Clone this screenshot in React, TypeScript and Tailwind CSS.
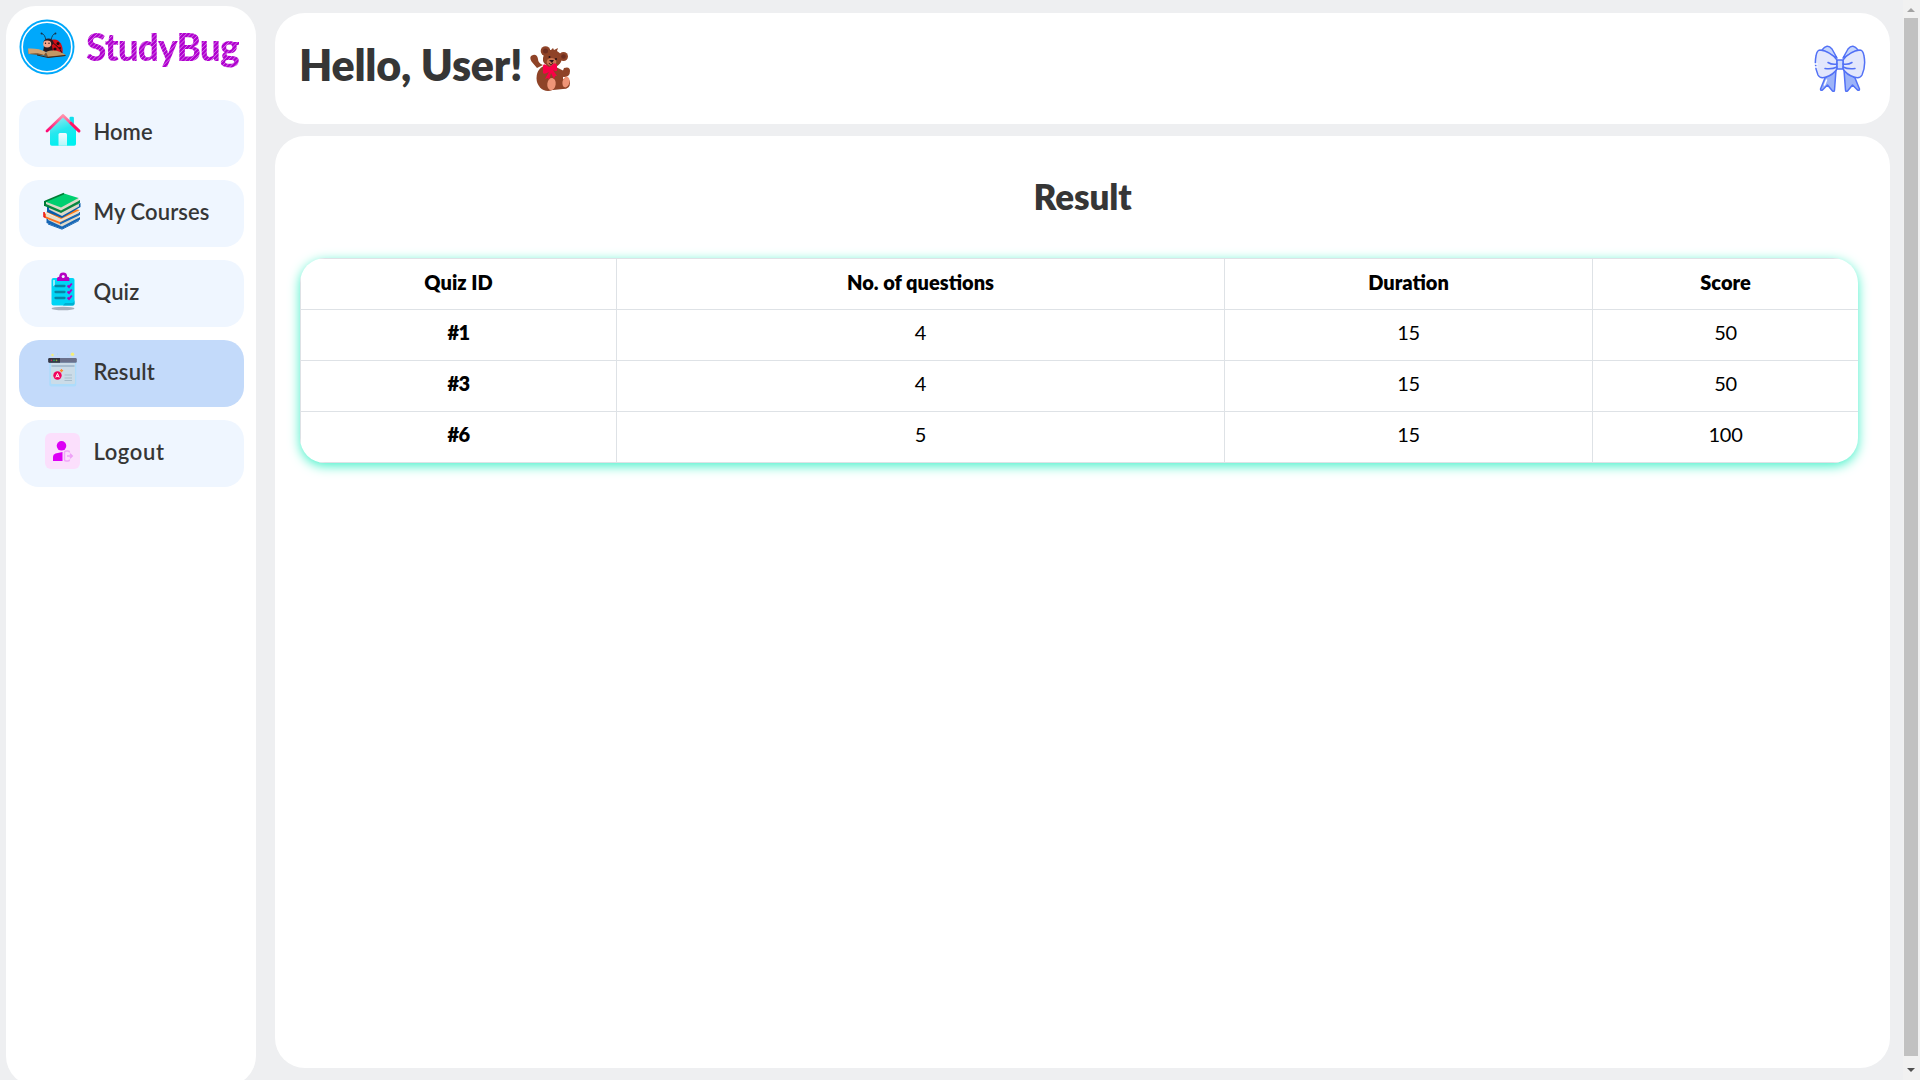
import React from "react";

function LogoBadge() {
  return (
    <svg viewBox="0 0 56 56" className="h-14 w-14 shrink-0">
      <circle cx="28" cy="28" r="27.5" fill="#00a8fb" />
      <circle cx="28" cy="28" r="24.8" fill="none" stroke="#fff" strokeWidth="1.6" />
      <path d="M27 21C26 17 25 15 22.500 14.500M32 21C33 17 34 15 36.500 14.500" fill="none" stroke="#183247" strokeWidth=".9" />
      <circle cx="22.500" cy="14.500" r=".9" fill="#183247" />
      <circle cx="36.500" cy="14.500" r=".9" fill="#183247" />
      <path d="M31 22C38 17 45 25 43.500 34L33 33Z" fill="#d40d16" />
      <path d="M31 22C36 25 41 29 43 34" stroke="#30090c" strokeWidth="1" fill="none" />
      <circle cx="39" cy="24.500" r="1.500" fill="#20090d" />
      <circle cx="36" cy="30" r="1.600" fill="#20090d" />
      <circle cx="41" cy="29" r="1" fill="#20090d" />
      <path d="M25 27h8l1 6H24Z" fill="#25181e" />
      <ellipse cx="29.500" cy="23.500" rx="5" ry="4" fill="#2b1b22" />
      <ellipse cx="28.200" cy="25" rx="4" ry="3.400" fill="#f3a58b" />
      <circle cx="26.500" cy="24.300" r=".7" fill="#1c1014" />
      <circle cx="30" cy="24.300" r=".7" fill="#1c1014" />
      <path d="M9 30L18 30.500 27 34 37 31.500 46.500 36 46 37 29 38.500 25 36.500 9.500 35Z" fill="#7b5634" />
      <path d="M9 29.500C15 29 22 30 27 33L25 36C20 33.500 14 34 9.500 35Z" fill="#d1a574" />
      <path d="M27 33C34 30 41 32 46.500 36L29 37.500Z" fill="#c39765" />
      <path d="M18 36L29 38.500 46.500 36.500" fill="none" stroke="#3b281c" strokeWidth="1" />
    </svg>
  );
}

function HomeIcon() {
  return (
    <svg viewBox="0 0 36 36" className="h-9 w-9">
      <defs>
        <linearGradient id="wall" x1="0" y1="0" x2=".35" y2="1">
          <stop stopColor="#a5e8ee" /><stop offset=".55" stopColor="#27e7ee" /><stop offset="1" stopColor="#00f0f0" />
        </linearGradient>
        <linearGradient id="roof" x1="0" y1="0" x2="0" y2="1">
          <stop stopColor="#ff91aa" /><stop offset="1" stopColor="#ff0874" />
        </linearGradient>
        <linearGradient id="door" x1="0" y1="0" x2="0" y2="1">
          <stop stopColor="#f5fbff" /><stop offset="1" stopColor="#b3f7fa" />
        </linearGradient>
      </defs>
      <path d="M24.500 5q0-1.200 1.200-1.200h2q1.200 0 1.200 1.200v9h-4.400Z" fill="#12dfec" />
      <path d="M5 16L18 4 31 16v15q0 1.800-1.800 1.800H6.800Q5 32.800 5 31Z" fill="url(#wall)" />
      <path d="M13.500 32.800V21.500q0-1.500 1.500-1.500h5.500q1.500 0 1.500 1.500v11.300Z" fill="url(#door)" />
      <path d="M2 18L18 2.500 34 18" fill="none" stroke="url(#roof)" strokeWidth="2.700" strokeLinecap="round" strokeLinejoin="round" />
      <path d="M26 10.200L34 18" stroke="#ff1464" strokeWidth="2.700" strokeLinecap="round" />
    </svg>
  );
}

function BooksIcon() {
  return (
    <svg viewBox="0 0 38 38" className="-mt-px -ml-0.5 h-[38px] w-[38px] shrink-0">
      <path d="M3.500 26V31L19 37 37 27.500V25L19 33Z" fill="#1565b5" />
      <path d="M5 28L19 34.500 36 25.500V22L18 27 5 24Z" fill="#ddd9c9" />
      <path d="M1 20Q0 23 2 26L17 32 37 22V20L17 28 3 22Z" fill="#ff711e" />
      <path d="M17 30.500L37 20V23L17 32.500Z" fill="#1769b6" />
      <path d="M3 21L17 27 36 18V21L17 30 3 24.500Z" fill="#e8dfcb" />
      <path d="M1 20V24.500L2.500 25.500" stroke="#e9131d" strokeWidth="1.500" fill="none" />
      <path d="M3 20L19 15 37 18 18 27Z" fill="#ff7c18" />
      <path d="M4 14V20L19 26 37.500 15V11L20 20Z" fill="#075cad" />
      <path d="M6 17.500L19 24 36 14.500V12L20 17 6 13Z" fill="#dcd8c9" />
      <path d="M2 9L1.500 14 18 21 37 11V8L18 16Z" fill="#078641" />
      <path d="M3 12L18 18.500 35.500 9V5.500L18 14 3 9Z" fill="#ddd8c6" />
      <path d="M2 9.500L21 1.500 35.500 6 18 15.500Z" fill="#00cf70" />
      <path d="M2 9.500L21 1.500" stroke="#007c35" strokeWidth="1.700" />
      <path d="M2 9V14" stroke="#007c35" strokeWidth="2" />
      <path d="M5 32L19 37.200 36 28.500" fill="none" stroke="#1769b6" strokeWidth="1" />
    </svg>
  );
}

function QuizIcon() {
  return (
    <svg viewBox="0 0 36 40" className="-mt-0.5 h-10 w-9">
      <ellipse cx="18" cy="37.500" rx="11.500" ry="1.700" fill="#a6aebb" />
      <rect x="6.500" y="7" width="23" height="27.500" rx="2" fill="#00d5f5" />
      <path d="M18 34.500L20 32h7q2 0 2.500-3v4q0 1.500-2 1.500Z" fill="#00afd2" />
      <path d="M9 9.500v5" stroke="#d1faff" strokeWidth="1.400" strokeLinecap="round" />
      <path d="M10.500 15h9M10.500 21h9M10.500 27h9" stroke="#0785a5" strokeWidth="2.300" strokeLinecap="round" />
      <path d="M22.500 14.500l1.500 1.500 2.800-3.500M22.500 20.500l1.500 1.500 2.800-3.500M22.500 26.500l1.500 1.500 2.800-3.500" fill="none" stroke="#ad00c4" strokeWidth="1.900" />
      <path d="M12 10V7.500q0-1.500 2.200-1.700 0-4.300 4-4.300t4 4.300q2.200.2 2.200 1.700V10Z" fill="#b500c2" />
      <circle cx="18.200" cy="5.500" r="1.500" fill="#edf5ff" />
    </svg>
  );
}

function ResultIcon() {
  return (
    <svg viewBox="0 0 36 36" className="-mt-px h-9 w-9">
      <rect x="4.300" y="8" width="27" height="26.500" rx="2" fill="#addcfb" />
      <path d="M6 11h24v20q0 1-1 1H7q-1 0-1-1Z" fill="#cbdce8" />
      <rect x="3.300" y="6" width="28.500" height="4.800" rx="1.200" fill="#6a718c" />
      <path d="M4.500 6h10.500v4.800H4.500q-1.200 0-1.200-1.200V7.200Q3.300 6 4.500 6Z" fill="#353744" />
      <circle cx="6.500" cy="8.400" r=".8" fill="#c32256" /><circle cx="9" cy="8.400" r=".8" fill="#18ad66" /><circle cx="11.500" cy="8.400" r=".8" fill="#8cac35" />
      <path d="M6.500 14h23" stroke="#9bb5ca" strokeWidth="1.500" />
      <circle cx="12.500" cy="23.500" r="4.200" fill="#f2005d" />
      <path d="M10.800 25.500l1.700-4 1.700 4M11.500 24.400h2" fill="none" stroke="#fff" strokeWidth="1" />
      <path d="M16.500 17v3.200M14.900 18.600h3.200" stroke="#ff8d2c" strokeWidth="1.300" />
      <path d="M19.500 23h7.500M19.500 26h7.500M19.500 28.500h7.500" stroke="#a8bdcb" strokeWidth="1" />
      <circle cx="27.500" cy="2.200" r="1.700" fill="#f4ef78" /><circle cx="7.500" cy="3" r="1.200" fill="#f4ef78" />
      <circle cx="12.500" cy="2" r=".5" fill="#9be3f5" /><circle cx="23" cy="3" r=".5" fill="#9be3f5" />
    </svg>
  );
}

function LogoutIcon() {
  return (
    <svg viewBox="0 0 36 36" className="h-9 w-9">
      <rect width="35" height="36" rx="6" fill="#fbdffc" />
      <circle cx="16.500" cy="12.800" r="4.800" fill="#dc00f5" />
      <path d="M8 28V23.500Q8 21.500 10.500 20.500L17.500 19v9Z" fill="#dc00f5" />
      <path d="M19.500 21v-1.500q0-1.500 1.500-1.500h2q1.500 0 1.500 1.500M19.500 20v6.500q0 1.500 1.500 1.500h2q1.500 0 1.500-1.500" fill="none" stroke="#efa8f7" strokeWidth="1.500" />
      <path d="M22 23h5M25 20.700l2.300 2.300-2.300 2.300" fill="none" stroke="#eea0f7" strokeWidth="1.400" />
    </svg>
  );
}

function Teddy() {
  return (
    <svg viewBox="0 0 42 46" className="h-[46px] w-[42px]">
      <g fill="#8f4327">
        <path d="M8 22L2.500 15.500Q-.5 10 4 9q4-1 5 4 0 4 5 6Z" />
        <ellipse cx="19" cy="32" rx="11.500" ry="13" />
        <circle cx="16.500" cy="5" r="4.800" /><circle cx="34.500" cy="10.500" r="4.500" />
        <path d="M14 12Q16 3 22 4l2-2 1 2 4-2-1 3q7 4 4 11-4 7-12 4-7-2-6-8Z" />
        <path d="M27 21l7 3.500 1-2.500q6-2 6 3 0 6-6 6l-8-1Z" />
        <path d="M24 26h10v7q7-2 7 4t-7 6l-10 1Z" />
      </g>
      <circle cx="16.500" cy="5" r="2.500" fill="#6e2e20" /><circle cx="34.500" cy="10.500" r="2.300" fill="#6e2e20" />
      <ellipse cx="22.500" cy="16" rx="4.800" ry="4" fill="#c97550" />
      <path d="M20 14h5l-2 3Z" fill="#271017" />
      <path d="M20 17q2 4 4 0" fill="none" stroke="#431818" strokeWidth="1" />
      <circle cx="20.500" cy="11" r="1" fill="#251019" /><circle cx="27" cy="13" r="1" fill="#251019" />
      <ellipse cx="22.500" cy="38" rx="4.200" ry="6.200" transform="rotate(7 22 38)" fill="#ef9577" />
      <ellipse cx="37" cy="36" rx="3.500" ry="5.500" transform="rotate(13 37 36)" fill="#ef9577" />
      <path d="M20 21q-6-5-6-1v7q1 2 6-1l-4 7 3-1 1 2 2-7 3 6 1-3h2l-4-6q5 3 4-2v-3q-2-4-6 1Z" fill="#fa0046" />
    </svg>
  );
}

function Bow() {
  return (
    <svg viewBox="0 0 52 50" className="h-[50px] w-[52px]" fill="none" stroke="#5271f6" strokeWidth="1.500" strokeLinejoin="round" strokeLinecap="round">
      <path d="M8 5Q13-2 18 4l5 9ZM44 5Q39-2 34 4l-5 9Z" fill="#c5d5fc" />
      <path d="M11 33L6.500 44q0 2 2 1l5-5 5 6q2 1 2-1L22 25ZM41 33l4.500 11q0 2-2 1l-5-5-5 6q-2 1-2-1L30 25Z" fill="#9cb3f8" />
      <path d="M23 15Q16 6 6 5 3 5 2 11 0 21 4 30q2 4 8 2 7-2 11-8Z" fill="#e3e7fc" />
      <path d="M29 15Q36 6 46 5q3 0 4 6 2 10-2 19-2 4-8 2-7-2-11-8Z" fill="#e3e7fc" />
      <rect x="23" y="15" width="6" height="9" rx="1" fill="#cedafd" />
      <path d="M23 19q-5 1-9-1.500M23 22q-5 2.500-12 1.500M29 19q5 1 9-1.500M29 22q5 2.500 12 1.500" />
      <path d="M0 19h3M0 22h3" stroke="#fff" />
      <path d="M12.500 35l-2 5" stroke="#fff" />
    </svg>
  );
}

const nav = [
  { label: "Home", Icon: HomeIcon, tracking: "tracking-normal" },
  { label: "My Courses", Icon: BooksIcon, tracking: "tracking-[0.1px]" },
  { label: "Quiz", Icon: QuizIcon, tracking: "tracking-[0.1px]" },
  { label: "Result", Icon: ResultIcon, tracking: "tracking-[0.2px]" },
  { label: "Logout", Icon: LogoutIcon, tracking: "tracking-[0.6px]" },
];

const rows = [
  ["#1", "4", "15", "50"],
  ["#3", "4", "15", "50"],
  ["#6", "5", "15", "100"],
];

export default function App() {
  return (
    <div className="flex h-[1080px] w-[1920px] overflow-hidden bg-[#eeeff1] font-['Lato',sans-serif] text-[#363636]">
      <aside className="mt-1.5 ml-1.5 h-[1080px] w-[250px] shrink-0 rounded-[30px] bg-white pt-[13px] pr-3 pl-[13px]">
        <div className="flex h-[81px] items-start">
          <LogoBadge />
          <span className="mt-[6px] ml-[11px] bg-[repeating-linear-gradient(135deg,#b000cf_0px,#b000cf_1.500px,#d470e6_2.200px,#b000cf_3px)] bg-clip-text text-[37px] leading-[44px] font-black tracking-[-0.9px] whitespace-nowrap text-transparent">StudyBug</span>
        </div>
        <nav className="flex flex-col gap-[13px]">
          {nav.map(({ label, Icon, tracking }) => (
            <a key={label} className={`flex h-[67px] items-start rounded-[20px] pt-[13px] pl-[26px] ${label === "Result" ? "bg-[#c3dafa]" : "bg-[#eff6ff]"}`}>
              <span className="flex h-10 w-9 shrink-0 items-start"><Icon /></span>
              <span className={`mt-[5px] ml-[12.5px] text-[22px] leading-[28px] font-semibold whitespace-nowrap ${tracking}`}>{label}</span>
            </a>
          ))}
        </nav>
      </aside>
      <main className="ml-[19px] flex w-[1615px] shrink-0 flex-col gap-3 pt-[13px]">
        <header className="flex h-[111px] shrink-0 items-start justify-between rounded-[30px] bg-white pr-6 pl-6">
          <div className="flex">
            <h1 className="mt-[25px] w-[226px] text-[43px] leading-[54px] font-extrabold tracking-[-0.25px] whitespace-nowrap">Hello, User!</h1>
            <div className="mt-[33px] ml-1"><Teddy /></div>
          </div>
          <div className="mt-8"><Bow /></div>
        </header>
        <section className="h-[932px] shrink-0 rounded-[30px] bg-white px-[25px] pt-[37px]">
          <h2 className="text-center text-[35px] leading-[46px] font-extrabold tracking-[-0.1px]">Result</h2>
          <div className="mt-[39px] w-[1558px] overflow-hidden rounded-[25px] shadow-[0_3px_12px_#44f1c9]">
            <table className="w-full table-fixed border-collapse text-center text-xl text-black">
              <colgroup><col className="w-[316px]" /><col className="w-[608px]" /><col className="w-[368px]" /><col className="w-[266px]" /></colgroup>
              <thead>
                <tr className="h-[51px]">
                  {["Quiz ID", "No. of questions", "Duration", "Score"].map((h) => <th key={h} className="border border-[#dee2e6] pb-[5px] font-extrabold">{h}</th>)}
                </tr>
              </thead>
              <tbody>
                {rows.map((r) => (
                  <tr key={r[0]} className="h-[51px]">
                    {r.map((c, i) => <td key={i} className={`border border-[#dee2e6] pb-1.5 ${i === 0 ? "font-extrabold tracking-[-0.5px]" : "font-normal tracking-[-0.3px]"}`}>{c}</td>)}
                  </tr>
                ))}
              </tbody>
            </table>
          </div>
        </section>
      </main>
      <div className="ml-[13px] flex w-[17px] shrink-0 flex-col items-center bg-[#f1f1f1]">
        <svg viewBox="0 0 17 18" className="h-[18px] w-[17px]"><path d="M4 12h8L8 8Z" fill="#a3a3a3" /></svg>
        <div className="mr-px h-[1038px] w-3.5 bg-[#c1c1c1]" />
        <svg viewBox="0 0 17 24" className="h-6 w-[17px]"><path d="M4 12h8L8 16Z" fill="#505050" /></svg>
      </div>
    </div>
  );
}
